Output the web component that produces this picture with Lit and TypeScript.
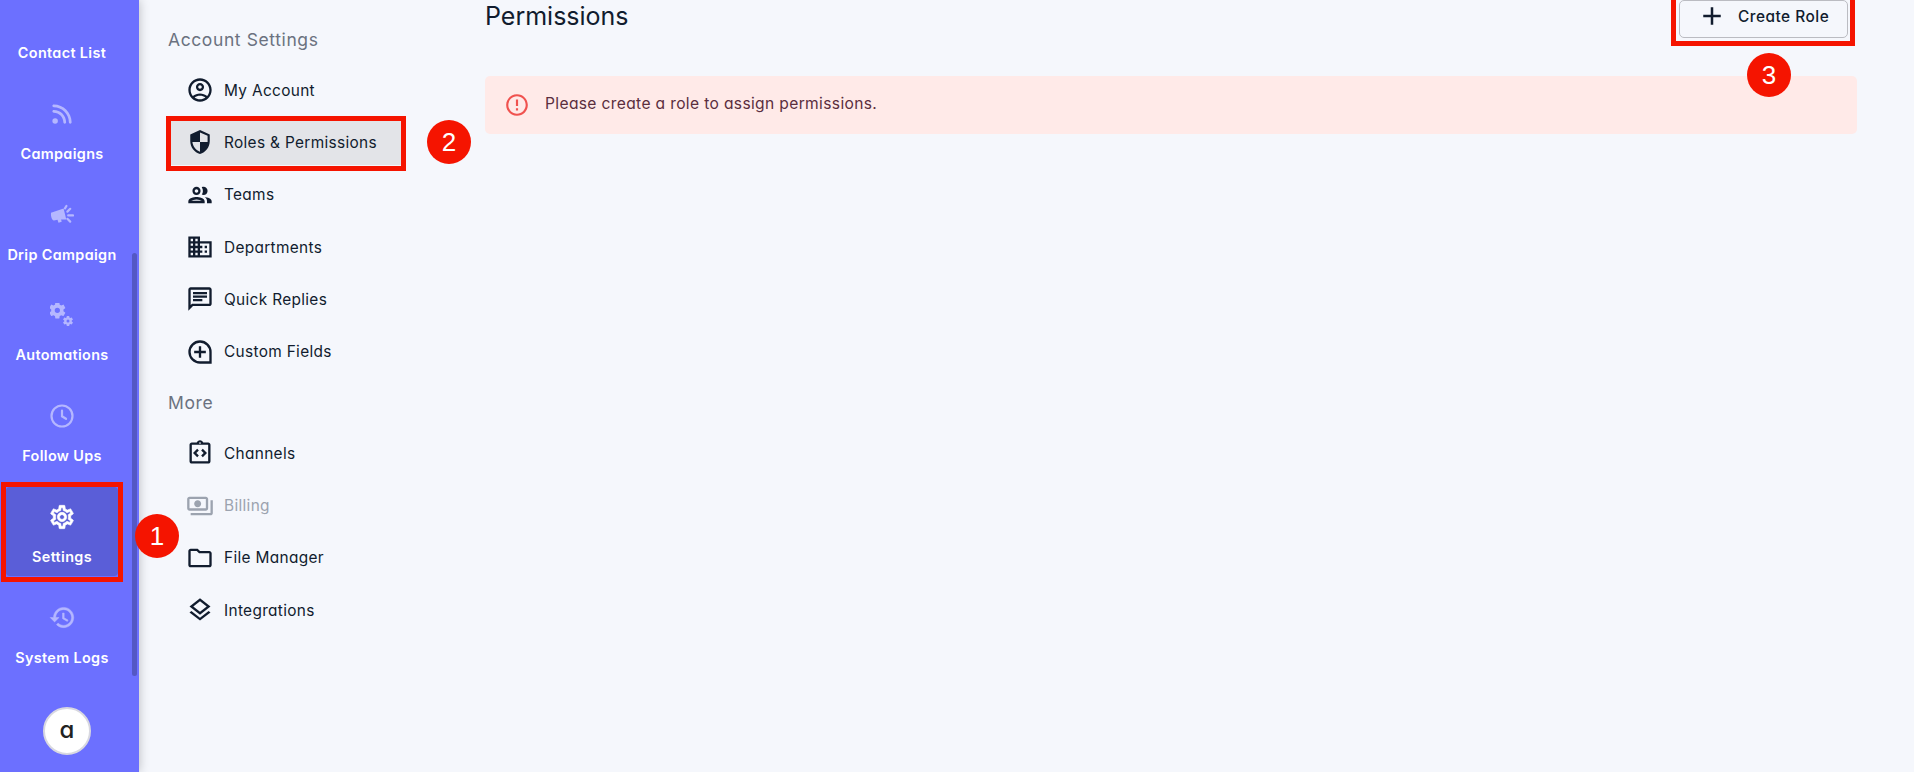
import { LitElement, html, svg, css } from "lit";
import { customElement } from "lit/decorators.js";

const gearD =
  "M19.43 12.98c.04-.32.07-.64.07-.98 0-.34-.03-.66-.07-.98l2.11-1.65c.19-.15.24-.42.12-.64l-2-3.46c-.09-.16-.26-.25-.44-.25-.06 0-.12.01-.17.03l-2.49 1c-.52-.4-1.08-.73-1.69-.98l-.38-2.65C14.46 2.18 14.25 2 14 2h-4c-.25 0-.46.18-.49.42l-.38 2.65c-.61.25-1.17.59-1.69.98l-2.49-1c-.06-.02-.12-.03-.18-.03-.17 0-.34.09-.43.25l-2 3.46c-.13.22-.07.49.12.64l2.11 1.65c-.04.32-.07.65-.07.98 0 .33.03.66.07.98l-2.11 1.65c-.19.15-.24.42-.12.64l2 3.46c.09.16.26.25.44.25.06 0 .12-.01.17-.03l2.49-1c.52.4 1.08.73 1.69.98l.38 2.65c.03.24.24.42.49.42h4c.25 0 .46-.18.49-.42l.38-2.65c.61-.25 1.17-.59 1.69-.98l2.49 1c.06.02.12.03.18.03.17 0 .34-.09.43-.25l2-3.46c.12-.22.07-.49-.12-.64l-2.11-1.65z";

const icons: Record<string, ReturnType<typeof svg>> = {
  rss: svg`<svg viewBox="0 0 448 512" width="20" height="22"><path d="M0 64C0 46.3 14.3 32 32 32c229.8 0 416 186.2 416 416c0 17.7-14.3 32-32 32s-32-14.3-32-32C384 253.6 226.4 96 32 96C14.3 96 0 81.7 0 64zM0 416a64 64 0 1 1 128 0A64 64 0 1 1 0 416zM32 160c159.1 0 288 128.9 288 288c0 17.7-14.3 32-32 32s-32-14.3-32-32c0-123.7-100.3-224-224-224c-17.7 0-32-14.3-32-32s14.3-32 32-32z"/></svg>`,
  drip: svg`<svg viewBox="0 0 24 24" width="24" height="24"><path d="M1 9.800 13.600 5.500l2.700 10.900-5.200.2.600 2.200-3.200.9-1-2.900-3.600.8C2 17.600 .6 13.500 1 9.800z"/><path d="M17.400 8.600 20.200 5.800M18.200 12.400h4.800M17.400 15.800l2.800 2.800M15 5.400l1.400-2.400" stroke="currentColor" stroke-width="2.200" stroke-linecap="round" fill="none"/></svg>`,
  cogs: svg`<svg viewBox="0 0 24 24" width="24" height="24"><g transform="translate(-2.500 -2.500) scale(.82)"><path fill-rule="evenodd" d="${gearD}M12 8.800a3.200 3.200 0 1 0 0 6.400 3.200 3.200 0 0 0 0-6.400z"/></g><g transform="translate(12 12) scale(.5)"><path fill-rule="evenodd" d="${gearD}M12 9a3 3 0 1 0 0 6 3 3 0 0 0 0-6z"/></g></svg>`,
  clock: svg`<svg viewBox="0 0 24 24" width="24" height="24"><circle cx="12" cy="12" r="10.500" fill="none" stroke="currentColor" stroke-width="2.200"/><path d="M12 6.500V12.300l4 2.500" fill="none" stroke="currentColor" stroke-width="2.200" stroke-linecap="round"/></svg>`,
  gear: svg`<svg viewBox="0 0 24 24" width="28" height="28"><path stroke="currentColor" stroke-width=".5" d="${gearD}m-1.980-1.710c.04.31.05.52.05.73 0 .21-.02.43-.05.73l-.14 1.130.89.7 1.080.84-.7 1.210-1.270-.51-1.040-.42-.9.68c-.43.32-.84.56-1.250.73l-1.060.43-.16 1.130-.2 1.350h-1.400l-.19-1.350-.16-1.130-1.060-.43c-.43-.18-.83-.41-1.230-.71l-.91-.7-1.060.43-1.270.51-.7-1.210 1.080-.84.89-.7-.14-1.130c-.03-.31-.05-.54-.05-.74s.02-.43.05-.73l.14-1.130-.89-.7-1.080-.84.7-1.210 1.270.51 1.040.42.9-.68c.43-.32.84-.56 1.250-.73l1.060-.43.16-1.130.2-1.350h1.390l.19 1.350.16 1.130 1.060.43c.43.18.83.41 1.230.71l.91.7 1.060-.43 1.270-.51.7 1.210-1.070.85-.89.7.14 1.130zM12 8c-2.210 0-4 1.790-4 4s1.790 4 4 4 4-1.790 4-4-1.790-4-4-4zm0 6c-1.100 0-2-.9-2-2s.9-2 2-2 2 .9 2 2-.9 2-2 2z"/></svg>`,
  history: svg`<svg viewBox="0 0 24 24" width="27" height="27"><path stroke="currentColor" stroke-width=".4" d="M13 3c-4.970 0-9 4.030-9 9H1l3.890 3.890.07.14L9 12H6c0-3.870 3.130-7 7-7s7 3.130 7 7-3.130 7-7 7c-1.930 0-3.680-.79-4.940-2.060l-1.420 1.420C8.270 19.990 10.510 21 13 21c4.970 0 9-4.030 9-9s-4.030-9-9-9zm-1 5v5l4.280 2.540.72-1.210-3.500-2.080V8H12z"/></svg>`,
  account: svg`<svg viewBox="0 0 24 24" width="28" height="28"><path d="M12 2C6.480 2 2 6.480 2 12s4.480 10 10 10 10-4.480 10-10S17.520 2 12 2zM7.350 18.500C8.660 17.560 10.260 17 12 17s3.340.56 4.650 1.500C15.340 19.440 13.740 20 12 20s-3.340-.56-4.650-1.500zm10.790-1.380C16.450 15.800 14.320 15 12 15s-4.450.8-6.140 2.120C4.700 15.730 4 13.950 4 12c0-4.420 3.580-8 8-8s8 3.580 8 8c0 1.950-.7 3.730-1.860 5.120zM12 6c-1.930 0-3.500 1.570-3.500 3.500S10.070 13 12 13s3.500-1.570 3.500-3.500S13.930 6 12 6zm0 5c-.83 0-1.500-.67-1.500-1.500S11.170 8 12 8s1.500.67 1.500 1.500S12.830 11 12 11z"/></svg>`,
  shield: svg`<svg viewBox="0 0 24 24" width="26" height="26"><path transform="matrix(-1 0 0 1 24 0)" d="M12 1L3 5v6c0 5.550 3.840 10.740 9 12 5.160-1.260 9-6.450 9-12V5l-9-4zm0 10.990h7c-.53 4.120-3.280 7.790-7 8.940V12H5V6.300l7-3.110v8.800z"/></svg>`,
  group: svg`<svg viewBox="0 0 24 24" width="28" height="28"><path d="M9 13.750c-2.340 0-7 1.170-7 3.500V19h14v-1.750c0-2.330-4.660-3.500-7-3.500zM4.340 17c.84-.58 2.870-1.250 4.660-1.250s3.820.67 4.660 1.250H4.340zM9 12c1.930 0 3.500-1.570 3.500-3.500S10.930 5 9 5 5.500 6.570 5.500 8.500 7.070 12 9 12zm0-5c.83 0 1.500.67 1.500 1.500S9.830 10 9 10s-1.500-.67-1.500-1.500S8.170 7 9 7zm7.040 6.810c1.160.84 1.960 1.960 1.960 3.440V19h4v-1.750c0-2.020-3.500-3.170-5.960-3.440zM15 12c1.930 0 3.500-1.570 3.500-3.500S16.930 5 15 5c-.54 0-1.040.13-1.500.35.63.89 1 1.980 1 3.150s-.37 2.260-1 3.150c.46.22.96.35 1.500.35z"/></svg>`,
  domain: svg`<svg viewBox="0 0 24 24" width="28" height="28"><path d="M12 7V3H2v18h20V7H12zM6 19H4v-2h2v2zm0-4H4v-2h2v2zm0-4H4V9h2v2zm0-4H4V5h2v2zm4 12H8v-2h2v2zm0-4H8v-2h2v2zm0-4H8V9h2v2zm0-4H8V5h2v2zm10 12h-8v-2h2v-2h-2v-2h2v-2h-2V9h8v10zm-2-8h-2v2h2v-2zm0 4h-2v2h2v-2z"/></svg>`,
  chat: svg`<svg viewBox="0 0 24 24" width="28" height="28"><path d="M20 2H4c-1.100 0-1.990.9-1.990 2L2 22l4-4h14c1.100 0 2-.9 2-2V4c0-1.100-.9-2-2-2zm0 14H5.170L4 17.170V4h16v12zM6 12h8v2H6zm0-3h12v2H6zm0-3h12v2H6z"/></svg>`,
  plusCircle: svg`<svg viewBox="0 0 24 24" width="28" height="28"><path fill="none" stroke="currentColor" stroke-width="2" d="M21 21V12a9 9 0 1 0-9 9z"/><path d="M11 7h2v4h4v2h-4v4h-2v-4H7v-2h4z"/></svg>`,
  channels: svg`<svg viewBox="0 0 24 24" width="28" height="28"><path d="M11 14.170 8.830 12 11 9.830 9.590 8.410 6 12l3.590 3.590zm3.410 1.420L18 12l-3.590-3.590L13 9.830 15.170 12 13 14.170z"/><path d="M19 3h-4.180C14.400 1.840 13.300 1 12 1s-2.400.84-2.820 2H5c-1.100 0-2 .9-2 2v14c0 1.100.9 2 2 2h14c1.100 0 2-.9 2-2V5c0-1.100-.9-2-2-2zm-7-.25c.41 0 .75.34.75.75s-.34.75-.75.75-.75-.34-.75-.75.34-.75.75-.75zM19 19H5V5h14v14z"/></svg>`,
  payments: svg`<svg viewBox="0 0 24 24" width="28" height="28"><path d="M19 14V6c0-1.100-.9-2-2-2H3c-1.100 0-2 .9-2 2v8c0 1.100.9 2 2 2h14c1.100 0 2-.9 2-2zm-2 0H3V6h14v8zm-7-7c-1.660 0-3 1.340-3 3s1.340 3 3 3 3-1.340 3-3-1.340-3-3-3zm13 0v11c0 1.100-.9 2-2 2H4v-2h17V7h2z"/></svg>`,
  folder: svg`<svg viewBox="0 0 24 24" width="28" height="28"><path d="M9.170 6l2 2H20v10H4V6h5.170M10 4H4c-1.100 0-1.990.9-1.990 2L2 18c0 1.100.9 2 2 2h16c1.100 0 2-.9 2-2V8c0-1.100-.9-2-2-2h-8l-2-2z"/></svg>`,
  layers: svg`<svg viewBox="0 0 24 24" width="28" height="28"><path d="M11.990 18.540l-7.370-5.730L3 14.070l9 7 9-7-1.630-1.270zM12 16l7.360-5.730L21 9l-9-7-9 7 1.630 1.270L12 16zm0-11.470L17.740 9 12 13.470 6.260 9 12 4.530z"/></svg>`,
  error: svg`<svg viewBox="0 0 24 24" width="26" height="26"><path d="M11 15h2v2h-2zm0-8h2v6h-2zm.99-5C6.470 2 2 6.480 2 12s4.470 10 9.990 10C17.520 22 22 17.520 22 12S17.520 2 11.990 2zM12 20c-4.420 0-8-3.580-8-8s3.580-8 8-8 8 3.580 8 8-3.580 8-8 8z"/></svg>`,
  add: svg`<svg viewBox="0 0 24 24" width="30" height="30"><path d="M19 13h-6v6h-2v-6H5v-2h6V5h2v6h6v2z"/></svg>`,
};

const navItems = [
  { label: "Contact List", icon: null },
  { label: "Campaigns", icon: "rss" },
  { label: "Drip Campaign", icon: "drip" },
  { label: "Automations", icon: "cogs" },
  { label: "Follow Ups", icon: "clock" },
  { label: "Settings", icon: "gear", active: true },
  { label: "System Logs", icon: "history" },
];

const accountLinks = [
  { label: "My Account", icon: "account" },
  { label: "Roles & Permissions", icon: "shield", active: true },
  { label: "Teams", icon: "group" },
  { label: "Departments", icon: "domain" },
  { label: "Quick Replies", icon: "chat" },
  { label: "Custom Fields", icon: "plusCircle" },
];

const moreLinks = [
  { label: "Channels", icon: "channels" },
  { label: "Billing", icon: "payments", disabled: true },
  { label: "File Manager", icon: "folder" },
  { label: "Integrations", icon: "layers" },
];

type Link = { label: string; icon: string; active?: boolean; disabled?: boolean };

@customElement("app-root")
export class AppRoot extends LitElement {
  private _renderLink(l: Link) {
    const cls = `link ${l.active ? "active" : ""} ${l.disabled ? "disabled" : ""}`;
    return html`
      <div class=${cls}>
        <span class="link-icon">${icons[l.icon]}</span>
        <span>${l.label}</span>
      </div>
    `;
  }

  render() {
    return html`
      <aside class="sidebar">
        <nav class="nav">
          ${navItems.map(
            (n) => html`
              <div class="nav-item ${n.active ? "active" : ""}">
                <span class="nav-icon">${n.icon ? icons[n.icon] : ""}</span>
                <span>${n.label}</span>
              </div>
            `
          )}
        </nav>
        <div class="avatar">a</div>
        <div class="scrollbar"></div>
      </aside>

      <section class="panel">
        <div class="panel-title">Account Settings</div>
        <div class="links">${accountLinks.map((l) => this._renderLink(l))}</div>
        <div class="panel-title more">More</div>
        <div class="links">${moreLinks.map((l) => this._renderLink(l))}</div>
      </section>

      <main class="main">
        <header class="main-head">
          <h1>Permissions</h1>
          <button class="create">${icons.add}<span>Create Role</span></button>
        </header>
        <div class="alert">
          <span class="alert-icon">${icons.error}</span>
          <span class="alert-text">Please create a role to assign permissions.</span>
        </div>
      </main>

      <div class="mark box-settings"></div>
      <div class="mark box-roles"></div>
      <div class="mark box-create"></div>
      <div class="step step-1">1</div>
      <div class="step step-2">2</div>
      <div class="step step-3">3</div>
    `;
  }

  static styles = css`
    :host {
      display: flex;
      position: relative;
      width: 100%;
      height: 772px;
      overflow: hidden;
      background: #f5f7fc;
      color: #111c2e;
      font-family: Inter, "Open Sans", sans-serif;
      font-feature-settings: "cv11" 1;
    }

    svg {
      display: block;
      fill: currentColor;
    }

    .sidebar {
      position: relative;
      flex: 0 0 139px;
      height: 772px;
      overflow: hidden;
      background: #6c70ff;
      box-shadow: 0 0 10px rgba(0, 0, 0, 0.25);
      z-index: 1;
    }

    .nav {
      display: flex;
      flex-direction: column;
      gap: 11.83px;
      margin-top: -17px;
      padding: 0 21px 0 6px;
    }

    .nav-item {
      display: flex;
      flex-direction: column;
      align-items: center;
      height: 89px;
      box-sizing: border-box;
      padding-top: 17px;
      border-radius: 4px;
      color: #fff;
      font-size: 14.4px;
      font-weight: 600;
      letter-spacing: 0.35px;
      line-height: 20px;
      white-space: nowrap;
    }

    .nav-item.active {
      background: #5a5ed8;
    }

    .nav-icon {
      display: flex;
      align-items: center;
      justify-content: center;
      height: 26px;
      margin-bottom: 17px;
      color: #b5b7ff;
    }

    .nav-item.active .nav-icon {
      color: #fff;
    }

    .scrollbar {
      position: absolute;
      top: 253px;
      left: 132px;
      width: 5px;
      height: 423px;
      border-radius: 3px;
      background: #5458c4;
    }

    .avatar {
      position: absolute;
      top: 707px;
      left: 43px;
      width: 48px;
      height: 48px;
      box-sizing: border-box;
      display: flex;
      align-items: center;
      justify-content: center;
      padding-bottom: 3px;
      border: 2px solid #d8d8e0;
      border-radius: 50%;
      background: #fff;
      color: #222;
      font-size: 24px;
      font-weight: 500;
    }

    .panel {
      flex: 0 0 346px;
      box-sizing: border-box;
      padding: 28px 0 0 29px;
    }

    .panel-title {
      height: 24px;
      margin-bottom: 15px;
      color: #6b7280;
      font-size: 17.5px;
      line-height: 24px;
      letter-spacing: 0.6px;
    }

    .panel-title.more {
      margin-top: 16.5px;
    }

    .links {
      display: flex;
      flex-direction: column;
      gap: 6.35px;
    }

    .link {
      display: flex;
      align-items: center;
      gap: 10px;
      width: 230px;
      height: 46px;
      box-sizing: border-box;
      margin-left: 3px;
      padding-left: 15px;
      font-size: 15.4px;
      letter-spacing: 0.33px;
    }

    .link.active {
      background: #e3e4e8;
    }

    .link.disabled {
      color: #9ca3af;
    }

    .link-icon {
      display: flex;
      align-items: center;
      justify-content: center;
      width: 28px;
      height: 28px;
    }

    .main {
      flex: 1;
      min-width: 0;
      padding-right: 57px;
    }

    .main-head {
      display: flex;
      justify-content: space-between;
      align-items: flex-start;
      height: 76px;
    }

    h1 {
      margin: 0;
      font-size: 25px;
      font-weight: 400;
      line-height: 33px;
    }

    .create {
      display: flex;
      align-items: center;
      gap: 11px;
      width: 169px;
      height: 38px;
      box-sizing: border-box;
      margin: 0 9px 0 0;
      padding: 0 0 6px 17px;
      border: 1px solid #bbbcc2;
      border-radius: 5px;
      background: transparent;
      color: #111c2e;
      font: inherit;
      font-size: 15.4px;
      font-weight: 500;
      letter-spacing: 0.5px;
    }

    .alert {
      display: flex;
      align-items: center;
      gap: 15px;
      height: 58px;
      box-sizing: border-box;
      padding-left: 19px;
      border-radius: 5px;
      background: #ffeae8;
      color: #5b2e3e;
      font-size: 15.6px;
      letter-spacing: 0.35px;
    }

    .alert-text {
      margin-bottom: 3px;
    }

    .alert-icon {
      color: #f0524f;
    }

    .mark {
      position: absolute;
      box-sizing: border-box;
      border: 5px solid #f51400;
      z-index: 2;
    }

    .box-settings {
      top: 482px;
      left: 1px;
      width: 122px;
      height: 100px;
    }

    .box-roles {
      top: 116px;
      left: 166px;
      width: 240px;
      height: 55px;
    }

    .box-create {
      top: -6px;
      left: 1671px;
      width: 184px;
      height: 52px;
    }

    .step {
      position: absolute;
      width: 44px;
      height: 44px;
      display: flex;
      align-items: center;
      justify-content: center;
      border-radius: 50%;
      background: #f51400;
      color: #fff;
      font-family: "Liberation Sans", Arial, sans-serif;
      font-size: 26px;
      z-index: 2;
    }

    .step-1 {
      top: 514px;
      left: 135px;
    }

    .step-2 {
      top: 120px;
      left: 427px;
    }

    .step-3 {
      top: 53px;
      left: 1747px;
    }
  `;
}
